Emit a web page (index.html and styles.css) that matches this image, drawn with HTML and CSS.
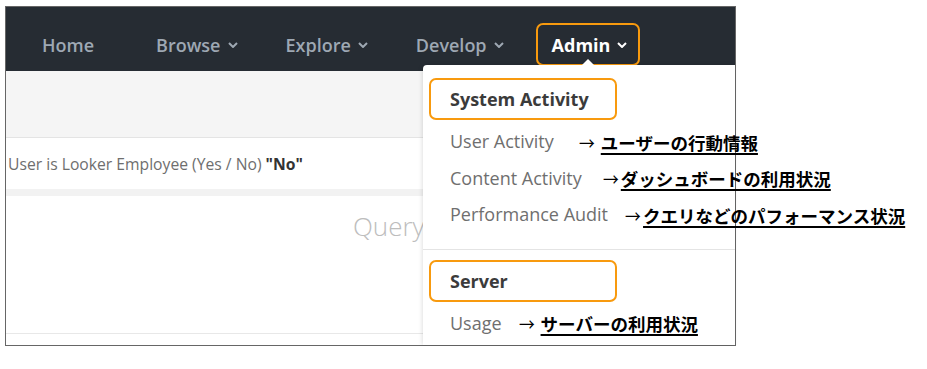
FILE: index.html
```html
<!DOCTYPE html>
<html lang="ja">
<head>
    <meta charset="UTF-8">
    <meta name="viewport" content="width=device-width, initial-scale=1.0">
    <title>Looker Admin Menu</title>
    <link rel="stylesheet" href="styles.css">
</head>
<body>
    <div class="frame">
        <div class="navbar">
            <div class="nav-item nav-home">Home</div>
            <div class="nav-item">Browse <svg class="chev" width="10" height="6" viewBox="0 0 10 6"><polyline points="1,1 5,5 9,1"/></svg></div>
            <div class="nav-item">Explore <svg class="chev" width="10" height="6" viewBox="0 0 10 6"><polyline points="1,1 5,5 9,1"/></svg></div>
            <div class="nav-item">Develop <svg class="chev" width="10" height="6" viewBox="0 0 10 6"><polyline points="1,1 5,5 9,1"/></svg></div>
            <div class="nav-item nav-active">Admin <svg class="chev" width="10" height="6" viewBox="0 0 10 6"><polyline points="1,1 5,5 9,1"/></svg></div>
        </div>
        <div class="subheader"></div>
        <div class="filter-row">User is Looker Employee (Yes / No) <b>"No"</b></div>
        <div class="band"></div>
        <div class="main">
            <div class="main-title">Query</div>
        </div>

        <div class="dropdown">
            <span class="caret"></span>
            <div class="menu-head">System Activity</div>
            <div class="menu-row">User Activity
                <span class="note note-1"><span class="arrow">→</span> <u>ユーザーの行動情報</u></span>
            </div>
            <div class="menu-row">Content Activity
                <span class="note note-2"><span class="arrow">→</span><u>ダッシュボードの利用状況</u></span>
            </div>
            <div class="menu-row">Performance Audit
                <span class="note note-3"><span class="arrow">→</span><u>クエリなどのパフォーマンス状況</u></span>
            </div>
            <div class="menu-sep"></div>
            <div class="menu-head">Server</div>
            <div class="menu-row">Usage
                <span class="note note-3"><span class="arrow">→</span> <u>サーバーの利用状況</u></span>
            </div>
        </div>
    </div>
</body>
</html>
```

FILE: styles.css
```css
body {
    margin: 0;
    background: #fff;
    font-family: "Open Sans", "Noto Sans", sans-serif;
}
.frame {
    position: relative;
    margin: 6px 0 0 5px;
    width: 729px;
    height: 338px;
    border: 1px solid #666;
    background: #fff;
}
.navbar {
    display: flex;
    align-items: flex-end;
    height: 59px;
    padding: 0 0 5px 12px;
    background: #262c33;
}
.nav-item {
    display: flex;
    align-items: center;
    height: 43px;
    padding: 0 24px;
    font-size: 18px;
    font-weight: 600;
    color: #9ea8b3;
    box-sizing: border-box;
}
.nav-home {
    margin-right: 14px;
}
.chev {
    margin-left: 7px;
    fill: none;
    stroke: currentColor;
    stroke-width: 2;
}
.nav-active {
    margin-left: 8px;
    padding: 0 11px 0 14px;
    color: #fff;
    font-weight: 700;
    border: 2px solid #f89a0e;
    border-radius: 7px;
}
.subheader {
    height: 66px;
    background: #f5f5f5;
    border-bottom: 1px solid #e4e4e4;
}
.filter-row {
    display: flex;
    align-items: center;
    height: 51px;
    padding-left: 2px;
    font-size: 15.7px;
    color: #6e6e6e;
}
.filter-row b {
    margin-left: 4px;
    color: #333;
}
.band {
    height: 7px;
    background: #f2f2f2;
}
.main {
    height: 137px;
    border-bottom: 1px solid #e8e8e8;
}
.main-title {
    padding: 12px 0 0 347px;
    font-size: 26px;
    font-weight: 300;
    color: #bdbdbd;
}
.dropdown {
    position: absolute;
    left: 417px;
    top: 58px;
    right: 0;
    bottom: 0;
    background: #fff;
    border-radius: 4px 0 0 0;
    box-shadow: -1px 0 4px rgba(0, 0, 0, 0.12);
}
.caret {
    position: absolute;
    top: -6px;
    left: 159px;
    border-left: 6px solid transparent;
    border-right: 6px solid transparent;
    border-bottom: 6px solid #fff;
}
.menu-head {
    display: flex;
    align-items: center;
    width: 188px;
    height: 42px;
    margin: 13px 0 3px 6px;
    padding-left: 19px;
    box-sizing: border-box;
    border: 2px solid #f89a0e;
    border-radius: 7px;
    font-size: 18px;
    font-weight: 700;
    color: #3b3b3b;
}
.menu-row {
    display: flex;
    align-items: center;
    height: 36.5px;
    padding-left: 27px;
    font-size: 18px;
    color: #6f6f6f;
    white-space: nowrap;
}
.menu-sep {
    height: 1px;
    margin-top: 16px;
    background: #e4e4e4;
}
.menu-sep + .menu-head {
    margin-top: 10px;
}
.note {
    margin-left: 25px;
    font-family: "Noto Sans CJK JP", sans-serif;
    font-size: 17.5px;
    font-weight: 700;
    color: #000;
    position: relative;
    top: 1px;
}
.note-2 {
    margin-left: 21px;
}
.note-3 {
    margin-left: 17px;
}
.arrow {
    display: inline-block;
    width: 18px;
    font-weight: 400;
    transform: scaleX(0.9);
    transform-origin: left center;
}
.note u {
    text-decoration-thickness: 2px;
    text-underline-offset: 3px;
}
```
